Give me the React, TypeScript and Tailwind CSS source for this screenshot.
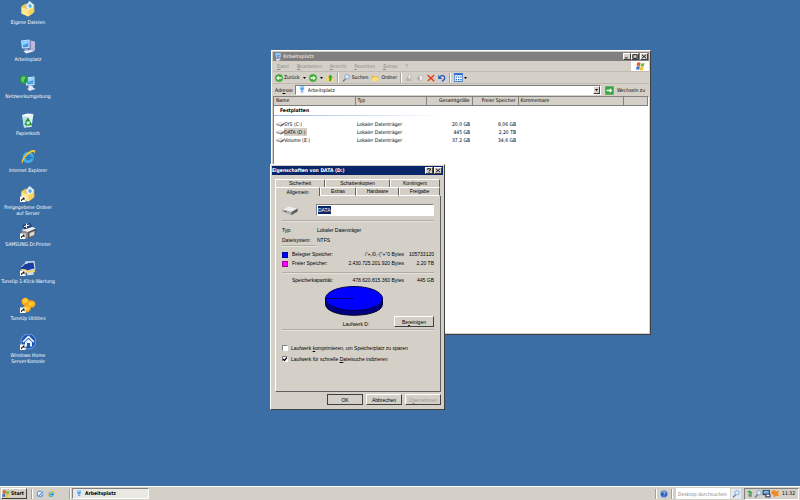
import { useState } from "react";
import type { ReactNode } from "react";

const raised =
  "border border-t-white border-l-white border-r-[#404040] border-b-[#404040] bg-[#d4d0c8]";
const sunken = "border border-t-[#808080] border-l-[#808080] border-r-white border-b-white";
const dialogFont = "font-['Liberation_Sans',Arial,sans-serif]";
const captionFont = "font-['DejaVu_Sans_Condensed','Noto_Sans',sans-serif] font-bold";

function Svg({ className, children }: { className?: string; children: ReactNode }) {
  return (
    <svg viewBox="0 0 32 32" className={`shrink-0 ${className ?? "size-4"}`} aria-hidden="true">
      {children}
    </svg>
  );
}

function Shortcut() {
  return (
    <g>
      <rect x="0" y="21" width="11" height="11" fill="#fff" />
      <path d="M2 30c0-4 2-5 4-5v-2h3v6l-2-2c-2 0-3 1-3 3z" fill="#111" />
    </g>
  );
}

function FolderArt() {
  return (
    <g>
      <path d="M3 10l9-5 4 3 12-2 1 16-12 9L3 25z" fill="#f1c64f" />
      <path d="M12 9L19 0l9 8-4 14-9-2z" fill="#e6f3fb" stroke="#9cc4dc" />
      <path d="M16 10l4-5 4 5-3 5z" fill="#5fa9de" />
      <path d="M3 12l10 4 14-3-2 12-9 6L3 25z" fill="#ffe793" />
      <path d="M17 18l9-3-1 9-8 5z" fill="#f7d25d" />
    </g>
  );
}

function ComputerArt() {
  return (
    <g>
      <path d="M21 5l9 2v18l-8 3z" fill="#b9b8dd" />
      <path d="M18 4l4 1v22l-4-2z" fill="#8582b8" />
      <path d="M2 5l17-2v17L4 21z" fill="#cfe2f7" />
      <path d="M4 7l13-2v13L6 19z" fill="#3e9ae8" />
      <path d="M4 7l13-2v5L5 15z" fill="#8fd0ff" />
      <path d="M9 21h7l1 4-8 1z" fill="#9aa4c4" />
      <path d="M7 26l14-2 6 3-15 4z" fill="#ececf8" />
    </g>
  );
}

// The small version used in title bars and the address box
function SmallComputerArt() {
  return (
    <g>
      <path d="M6 1l20-1v17l-18 2z" fill="#d9ecff" />
      <path d="M9 3l14-1v12l-13 2z" fill="#3e96ea" />
      <path d="M9 3l14-1v5L9 11z" fill="#8ccdff" />
      <path d="M13 18h8v6h-8z" fill="#4f7fc4" />
      <path d="M8 24l15-2 4 4-12 6-7-3z" fill="#dfe6f6" />
    </g>
  );
}

function NetworkArt() {
  return (
    <g>
      <path d="M10 5l19-2v17l-17 1z" fill="#cfe2f7" />
      <path d="M13 7l14-2v13l-13 1z" fill="#4aa5ec" />
      <path d="M13 7l14-2v5l-13 4z" fill="#98d8ff" />
      <path d="M17 21h8l1 4-9 2zM14 27l12-2 5 3-12 4z" fill="#e4e4f2" />
      <circle cx="8" cy="9" r="8" fill="#239b42" />
      <path d="M2 6l6-4 3 4-4 5 2 5-6-3z" fill="#67d05b" />
    </g>
  );
}

function BinArt() {
  return (
    <g>
      <path d="M4 6l23-2-4 26-15 1z" fill="#dff2f5" />
      <path d="M4 6l11-3 12 1-11 4z" fill="#fff" />
      <path d="M5 9l11 1-1 20-7 1z" fill="#b9dfe8" />
      <path d="M12 20l4-6 3 5M20 20l2 5-6 1M15 27l-4-3 1-3" fill="none" stroke="#16952c" strokeWidth="3" />
    </g>
  );
}

function IeArt() {
  return (
    <g>
      <path d="M25 20c-5 9-18 6-17-4 1-10 17-10 17 1H10" fill="none" stroke="#3fb0ec" strokeWidth="5" />
      <path d="M9 17h16" stroke="#1672c0" strokeWidth="3" />
      <path d="M5 29C-2 27 12 4 26 2c6-1 5 4 3 8 0-5-3-5-8-2C12 13 5 24 5 29z" fill="#f4c430" />
    </g>
  );
}

function PrinterArt() {
  return (
    <g>
      <path d="M3 14l19-7 10 4v14l-16 6L3 27z" fill="#898989" />
      <path d="M3 14l19-7 10 4-16 7z" fill="#f1f1f1" />
      <path d="M16 18l16-7v14l-16 6z" fill="#535353" />
      <path d="M19 20l10-4v8l-10 4z" fill="#d5d5d5" />
      <path d="M5 4l16-4 3 8-15 5z" fill="#173f7d" />
      <path d="M13 1v9M8 7l11-3" stroke="#fff" strokeWidth="2" />
    </g>
  );
}

function MaintenanceArt() {
  return (
    <g>
      <path d="M10 3l19-1 2 17-17 4z" fill="#dbe6f4" />
      <path d="M13 6l14-1 2 12-13 3z" fill="#1a3fa0" />
      <path d="M1 18c4-9 11-12 16-12l2 13-7 5z" fill="#193c9a" />
      <path d="M3 14c4-6 9-8 13-8" fill="none" stroke="#dbe6f4" strokeWidth="2" />
      <path d="M1 19c6-2 11 0 17 3l10-3 3 4-12 6z" fill="#f2d269" />
      <path d="M14 26l12-2 2 5-13 2z" fill="#ddd" />
    </g>
  );
}

function TuneUpArt() {
  return (
    <g>
      <path d="M3 9c0-9 13-10 15-2 7-2 14 2 13 8-1 5-5 7-9 6 0 9-11 13-15 7-3-5 0-9 2-11-4-1-6-4-6-8z" fill="#f5a515" />
      <path d="M5 7c2-6 9-6 11-1l-3 6-6 1zM18 11c4-3 10-1 11 3l-6 4-6-2zM10 20l6-2 4 3-3 6-6-1z" fill="#ffca3a" />
    </g>
  );
}

function HomeServerArt() {
  return (
    <g>
      <circle cx="17" cy="15" r="15" fill="#1d58b4" stroke="#88b8ec" strokeWidth="1.5" />
      <path d="M6 16L17 5l11 11" fill="none" stroke="#fff" strokeWidth="3" />
      <path d="M10 16l7-6 7 6v9h-4v-7h-6v7h-4z" fill="#e4f1ff" />
    </g>
  );
}

function DriveArt() {
  return (
    <g>
      <path d="M1 15l13-7 17 5v6l-12 7L1 19z" fill="#8b8b8b" />
      <path d="M1 15l13-7 17 5-12 7z" fill="#eeeeee" />
      <path d="M1 15l18 5v6L1 19z" fill="#b5b5b5" />
      <path d="M19 20l12-7v6l-12 7z" fill="#606060" />
      <path d="M4 18l6 2" stroke="#4d4d4d" strokeWidth="1.5" />
    </g>
  );
}

function WindowsArt() {
  return (
    <g>
      <path d="M4 3c4-3 8-2 12 0l-2 12c-4-2-8-2-12 0z" fill="#ea5a2b" />
      <path d="M18 4c4 2 8 2 13-1l-3 12c-4 2-8 2-12 0z" fill="#7cba3c" />
      <path d="M2 17c3-2 7-2 12 0l-3 11c-4-2-7-2-11 0z" fill="#3a7ad9" />
      <path d="M15 18c5 2 9 2 13 0l-3 11c-4 2-8 2-13 0z" fill="#f7c32e" />
    </g>
  );
}

function SearchArt() {
  return (
    <g>
      <path d="M15 18L4 30" stroke="#6b7d94" strokeWidth="5" />
      <circle cx="20" cy="11" r="9" fill="#d6edff" stroke="#7798c0" strokeWidth="3" />
    </g>
  );
}

function ArrowArt({ flip = false }: { flip?: boolean }) {
  return (
    <g>
      <circle cx="16" cy="16" r="15" fill="#3fb035" stroke="#2f9328" />
      <path
        d={flip ? "M15 6L5 16l10 10v-7h11v-6H15z" : "M17 6l10 10-10 10v-7H6v-6h11z"}
        fill="#fff"
      />
    </g>
  );
}

const shortcuts = [
  { lines: ["Eigene Dateien"], art: <FolderArt />, link: false },
  { lines: ["Arbeitsplatz"], art: <ComputerArt />, link: false },
  { lines: ["Netzwerkumgebung"], art: <NetworkArt />, link: false },
  { lines: ["Papierkorb"], art: <BinArt />, link: false },
  { lines: ["Internet Explorer"], art: <IeArt />, link: false },
  { lines: ["Freigegebene Ordner", "auf Server"], art: <FolderArt />, link: true },
  { lines: ["SAMSUNG Dr.Printer"], art: <PrinterArt />, link: true },
  { lines: ["TuneUp 1-Klick-Wartung"], art: <MaintenanceArt />, link: true },
  { lines: ["TuneUp Utilities"], art: <TuneUpArt />, link: true },
  { lines: ["Windows Home", "Server-Konsole"], art: <HomeServerArt />, link: true },
];

const drives = [
  { name: "SYS (C:)", total: "20,0 GB", free: "8,06 GB" },
  { name: "DATA (D:)", total: "445 GB", free: "2,20 TB" },
  { name: "Volume (E:)", total: "37,2 GB", free: "34,6 GB" },
];

function DesktopIcons() {
  return (
    <nav className="flex w-14 flex-col text-white" aria-label="Desktop">
      {shortcuts.map(s => (
        <button key={s.lines[0]} type="button" className="flex h-[37px] flex-col items-center gap-0.5 pt-px">
          <Svg>
            {s.art}
            {s.link && <Shortcut />}
          </Svg>
          <span className="flex flex-col items-center leading-[6px] whitespace-nowrap">
            {s.lines.map(line => (
              <span key={line}>{line}</span>
            ))}
          </span>
        </button>
      ))}
    </nav>
  );
}

function CaptionButton({ label, children }: { label: string; children: ReactNode }) {
  return (
    <button type="button" aria-label={label} className={`flex h-[7px] w-2 items-center justify-center ${raised}`}>
      <svg viewBox="0 0 8 7" className="h-[5px] w-1.5" fill="none" stroke="#000" strokeWidth="1.2">
        {children}
      </svg>
    </button>
  );
}

function Separator() {
  return <span className="h-2.5 w-0.5 shrink-0 border-l border-[#a5a29b] bg-white" />;
}

function Caret() {
  return (
    <svg viewBox="0 0 6 4" className="h-0.5 w-[3px] shrink-0" aria-hidden="true">
      <path d="M0 0h6L3 4z" fill="#000" />
    </svg>
  );
}

function Explorer() {
  const [selected, setSelected] = useState("DATA (D:)");

  return (
    <section className={`absolute top-[50px] left-[271px] flex h-[285px] w-[380px] flex-col p-px ${raised}`}>
      <header className="flex h-[9px] shrink-0 items-center gap-px bg-[#808080] px-px text-[#d4d0c8]">
        <Svg className="size-2"><SmallComputerArt /></Svg>
        <h1 className={`flex-1 ${captionFont}`}>Arbeitsplatz</h1>
        <div className="flex">
          <CaptionButton label="Minimieren"><path d="M1 5.5h4" /></CaptionButton>
          <CaptionButton label="Maximieren"><path d="M1 1h6v5H1z" /></CaptionButton>
        </div>
        <CaptionButton label="Schließen"><path d="M1 1l6 5M7 1L1 6" /></CaptionButton>
      </header>

      <div className="flex h-[11px] shrink-0 items-stretch border-b border-[#bfbbb3]">
        <div className="flex flex-1 items-center gap-2 pl-1 text-[#8b8984]">
          {["Datei", "Bearbeiten", "Ansicht", "Favoriten", "Extras", "?"].map(m => (
            <button key={m} type="button" className="first-letter:underline">{m}</button>
          ))}
        </div>
        <div className="flex w-[18px] items-center justify-center bg-white">
          <Svg className="size-[9px]"><WindowsArt /></Svg>
        </div>
      </div>

      <div className="flex h-3 shrink-0 items-center gap-[3px] border-b border-[#bfbbb3] pl-0.5">
        <button type="button" className="flex items-center gap-px">
          <Svg className="size-2"><ArrowArt flip /></Svg>Zurück
        </button>
        <Caret />
        <button type="button" aria-label="Vorwärts"><Svg className="size-2"><ArrowArt /></Svg></button>
        <Caret />
        <button type="button" aria-label="Aufwärts">
          <Svg className="size-2">
            <path d="M1 8h10l3 4h16v18H1z" fill="#f5d873" />
            <path d="M13 29V14H8L18 2l9 12h-5v10l-5 5z" fill="#36a32c" />
          </Svg>
        </button>
        <Separator />
        <button type="button" className="flex items-center gap-0.5">
          <Svg className="size-2"><SearchArt /></Svg>Suchen
        </button>
        <button type="button" className="flex items-center gap-0.5">
          <Svg className="size-2"><path d="M1 6h11l3 4h14v18H3z" fill="#e8b941" /><path d="M6 14h25l-5 14H3z" fill="#ffe07a" /></Svg>
          Ordner
        </button>
        <Separator />
        <button type="button" aria-label="Verschieben" disabled>
          <Svg className="size-2"><path d="M5 12h20v16H5z" fill="#bab7b0" /><path d="M13 2h10v18H13z" fill="#eee" stroke="#aaa" strokeWidth="2" /></Svg>
        </button>
        <button type="button" aria-label="Kopieren" disabled>
          <Svg className="size-2"><path d="M3 18l10-10v20z" fill="#aaa" /><path d="M14 6h12v19H14z" fill="#eee" stroke="#aaa" strokeWidth="2" /></Svg>
        </button>
        <button type="button" aria-label="Löschen">
          <Svg className="size-2"><path d="M2 4l27 25M29 4L3 28" stroke="#e63c19" strokeWidth="6" /></Svg>
        </button>
        <button type="button" aria-label="Rückgängig">
          <Svg className="size-2"><path d="M8 11c8-9 19-5 19 5 0 6-5 10-11 13" fill="none" stroke="#2b5fc0" strokeWidth="6" /><path d="M1 3v17h16z" fill="#2b5fc0" /></Svg>
        </button>
        <Separator />
        <button type="button" aria-label="Ansichten" className="flex items-center gap-px">
          <Svg className="size-[9px]"><path d="M1 2h30v28H1z" fill="#fff" stroke="#2a69c7" strokeWidth="3" /><path d="M1 2h30v6H1z" fill="#2a69c7" /><path d="M6 12h5v5H6zM14 12h5v5h-5zM22 12h5v5h-5zM6 21h5v5H6zM14 21h5v5h-5zM22 21h5v5h-5z" fill="#2a69c7" /></Svg>
          <Caret />
        </button>
      </div>

      <div className="flex h-3 shrink-0 items-center gap-0.5 pl-0.5">
        <label htmlFor="address">Adr<u>e</u>sse</label>
        <div className={`flex h-2.5 flex-1 items-center gap-0.5 bg-white pl-0.5 ${sunken}`}>
          <Svg className="size-2"><SmallComputerArt /></Svg>
          <div className="relative flex flex-1">
            <select id="address" className="h-2 flex-1 appearance-none bg-white leading-[8px]">
              <option>Arbeitsplatz</option>
            </select>
            <span className={`pointer-events-none absolute top-0 right-0 flex h-2 w-[7px] items-center justify-center ${raised}`}>
              <Caret />
            </span>
          </div>
        </div>
        <button type="button" className="flex items-center gap-0.5 pr-1 pl-0.5">
          <Svg className="mr-px size-[9px]"><path d="M1 1h30v30H1z" fill="#36a344" /><path d="M17 7l9 9-9 9v-6H6v-6h11z" fill="#fff" /></Svg>
          Wechseln zu
        </button>
      </div>

      <div className={`flex-1 overflow-hidden bg-white ${sunken}`}>
        <table className="w-full table-fixed border-collapse text-left">
          <colgroup>
            <col className="w-[81px]" />
            <col className="w-[71px]" />
            <col className="w-[46px]" />
            <col className="w-[46px]" />
            <col className="w-[105px]" />
            <col />
          </colgroup>
          <thead>
            <tr className="h-2 border-b border-[#808080] bg-[#d4d0c8] *:border-r *:border-[#808080] *:px-0.5 *:font-normal *:leading-[7px]">
              <th>Name</th>
              <th>Typ</th>
              <th className="text-right">Gesamtgröße</th>
              <th className="text-right whitespace-nowrap">Freier Speicher</th>
              <th>Kommentare</th>
              <th aria-label="Leer" />
            </tr>
          </thead>
          <tbody>
            <tr>
              <th colSpan={6} className="pb-1">
                <div className="w-[170px] bg-linear-to-r from-[#9db9e4] to-white pb-px">
                  <div className={`bg-white pl-1.5 leading-[9px] ${captionFont}`}>Festplatten</div>
                </div>
              </th>
            </tr>
            {drives.map(d => (
              <tr key={d.name} onClick={() => setSelected(d.name)} className="*:px-0.5 *:leading-[8px]">
                <td>
                  <span className="flex items-center">
                    <Svg className="size-2"><DriveArt /></Svg>
                    <span className={selected === d.name ? "bg-[#d4d0c8] pr-0.5" : ""}>{d.name}</span>
                  </span>
                </td>
                <td>Lokaler Datenträger</td>
                <td className="text-right">{d.total}</td>
                <td className="text-right">{d.free}</td>
                <td />
                <td />
              </tr>
            ))}
          </tbody>
        </table>
      </div>
    </section>
  );
}

function Rule({ className = "" }: { className?: string }) {
  return <div className={`h-0.5 shrink-0 border-t border-[#b0ada5] bg-[#e6e3dd] ${className}`} />;
}

function Pie() {
  return (
    <svg viewBox="0 0 58 30" className="h-[30px] w-[58px]" role="img" aria-label="Laufwerk D:">
      <path d="M0.5 12v6c0 15 57 15 57 0v-6z" fill="#000080" stroke="#000030" />
      <ellipse cx="29" cy="12.500" rx="28.500" ry="12" fill="#0000ff" stroke="#000050" />
      <path d="M1 12.500h28" stroke="#000070" />
    </svg>
  );
}

const tab =
  "border-t border-l border-r border-t-white border-l-white border-r-[#606060] rounded-t-[1px] leading-[7px]";

function Properties() {
  const [name, setName] = useState("DATA");

  return (
    <section
      role="dialog"
      aria-label="Eigenschaften von DATA (D:)"
      className={`absolute top-[164px] left-[270px] flex w-[175px] flex-col p-px ${raised} ${dialogFont}`}
    >
      <header className="flex h-[9px] items-center bg-[#0a246a] pr-px text-white">
        <h2 className={`flex-1 whitespace-nowrap ${captionFont}`}>Eigenschaften von DATA (D:)</h2>
        <div className="flex gap-px">
          <CaptionButton label="Hilfe"><path d="M2 2.500V1h4v2L4 4M4 5v2" /></CaptionButton>
          <CaptionButton label="Schließen"><path d="M1 1l6 5M7 1L1 6" /></CaptionButton>
        </div>
      </header>

      <div className="flex flex-col pt-1 pr-0.5 pl-[3px]">
        <div role="tablist" className="flex flex-col">
          <div className="flex h-2 pr-px">
            <button type="button" role="tab" className={`w-[50px] ${tab}`}>Sicherheit</button>
            <button type="button" role="tab" className={`w-[65px] ${tab}`}>Schattenkopien</button>
            <button type="button" role="tab" className={`flex-1 ${tab}`}>Kontingent</button>
          </div>
          <div className="flex h-[9px] pr-px">
            <button type="button" role="tab" aria-selected="true" className={`w-[45px] ${tab}`}>Allgemein</button>
            <button type="button" role="tab" className={`w-9 border-b border-b-white ${tab}`}>Extras</button>
            <button type="button" role="tab" className={`w-[43px] border-b border-b-white ${tab}`}>Hardware</button>
            <button type="button" role="tab" className={`flex-1 border-b border-b-white ${tab}`}>Freigabe</button>
          </div>
        </div>

        <div className="flex h-[196px] flex-col border-r border-b border-l border-r-[#606060] border-b-[#606060] border-l-white px-1.5 pt-1.5">
          <div className="flex items-center">
            <Svg className="mr-[18px] size-4"><DriveArt /></Svg>
            <div className={`flex h-3 flex-1 items-center bg-white pl-px ${sunken}`}>
              <input
                aria-label="Name"
                value={name}
                onChange={e => setName(e.target.value)}
                className="field-sizing-content h-2 bg-[#0a246a] leading-[8px] text-white"
              />
            </div>
          </div>
          <Rule className="mt-0.5" />

          <dl className="mt-[3px] grid grid-cols-[35px_1fr] leading-[10px]">
            <dt>Typ:</dt>
            <dd>Lokaler Datenträger</dd>
            <dt>Dateisystem:</dt>
            <dd>NTFS</dd>
          </dl>
          <Rule className="w-[34px]" />

          <table className="mt-[3px] w-full leading-[9px]">
            <tbody>
              <tr>
                <td className="w-2.5"><div className="size-1.5 border border-[#0000a0] bg-[#0000ff]" /></td>
                <th className="text-left font-normal">Belegter Speicher:</th>
                <td className="text-right">/'+,/0,-(''+''0 Bytes</td>
                <td className="w-[30px] text-right">105733120</td>
              </tr>
              <tr>
                <td><div className="size-1.5 border border-[#a000a0] bg-[#ff00ff]" /></td>
                <th className="text-left font-normal">Freier Speicher:</th>
                <td className="text-right">2.430.725.201.920 Bytes</td>
                <td className="text-right">2,20 TB</td>
              </tr>
            </tbody>
          </table>
          <Rule className="mt-1" />
          <div className="mt-0.5 flex pl-2.5 leading-[9px]">
            <span>Speicherkapazität:</span>
            <span className="flex-1 text-right">478.620.815.360 Bytes</span>
            <span className="w-[30px] text-right">445 GB</span>
          </div>

          <div className="mt-px flex items-end pl-[43px]">
            <div className="flex flex-col items-center gap-1">
              <Pie />
              <span className="pl-1 leading-[8px]">Laufwerk D:</span>
            </div>
            <button type="button" className={`mb-px ml-auto h-[11px] w-10 leading-[8px] ${raised}`}>Be<u>r</u>einigen</button>
          </div>
          <Rule className="mt-px" />

          <div className="mt-[13px] flex flex-col gap-[3px] leading-[8px]">
            <label className="flex items-center gap-[3px]">
              <input type="checkbox" className={`size-1.5 appearance-none bg-white ${sunken}`} />
              <span>Laufwerk <u>k</u>omprimieren, um Speicherplatz zu sparen</span>
            </label>
            <label className="flex items-center gap-[3px]">
              <span className="relative flex">
                <input type="checkbox" defaultChecked className={`peer size-1.5 appearance-none bg-white ${sunken}`} />
                <svg viewBox="0 0 6 6" className="pointer-events-none absolute inset-0 hidden size-1.5 peer-checked:block">
                  <path d="M1 3l1.500 1.500L5 1.500" fill="none" stroke="#000" strokeWidth="1.200" />
                </svg>
              </span>
              <span>Laufwerk für schnelle <u>D</u>ateisuche indizieren</span>
            </label>
          </div>
        </div>

        <footer className="flex justify-end gap-[3px] pt-0.5 pb-[3px]">
          <button type="button" className={`h-[11px] w-9 leading-[8px] outline -outline-offset-1 outline-[#404040] ${raised}`}>OK</button>
          <button type="button" className={`h-[11px] w-9 leading-[8px] ${raised}`}>Abbrechen</button>
          <button type="button" disabled className={`h-[11px] w-9 leading-[8px] text-[#9a9790] ${raised}`}>Ü<u>b</u>ernehmen</button>
        </footer>
      </div>
    </section>
  );
}

function Taskbar() {
  return (
    <footer className="flex h-3.5 items-center border-t border-white bg-[#d4d0c8] px-px">
      <button type="button" className={`flex h-[11px] w-[26px] items-center gap-px ${captionFont} ${raised}`}>
        <Svg className="size-2"><WindowsArt /></Svg>Start
      </button>
      <div className="ml-1 flex items-center gap-[3px]">
        <Separator />
        <button type="button" aria-label="Desktop anzeigen">
          <Svg className="size-2"><path d="M3 9l9-7 17 4v18l-11 6L3 25z" fill="#6ba3d7" /><path d="M8 9l14-2 5 8-10 9-9-4z" fill="#fff" /><path d="M11 21l12-13 3 3-12 12z" fill="#3577bd" /></Svg>
        </button>
        <button type="button" aria-label="Internet Explorer"><Svg className="size-2"><IeArt /></Svg></button>
      </div>
      <div className="ml-3.5 flex items-center gap-px">
        <Separator />
        <button type="button" className={`flex h-[11px] w-[77px] items-center gap-0.5 bg-[#eae8e3] pl-0.5 ${captionFont} ${sunken}`}>
          <Svg className="size-2"><SmallComputerArt /></Svg>Arbeitsplatz
        </button>
      </div>
      <div className="ml-auto flex items-center gap-[3px]">
        <Separator />
        <button type="button" aria-label="Hilfe">
          <Svg className="size-2"><circle cx="16" cy="16" r="14" fill="#2459bd" stroke="#a9c3ec" strokeWidth="2" /><path d="M11 12c0-7 11-6 10 0-1 3-5 3-5 7M16 22v4" fill="none" stroke="#fff" strokeWidth="3" /></Svg>
        </button>
        <Separator />
        <div className="flex items-center gap-px">
          <input
            aria-label="Desktop durchsuchen"
            placeholder="Desktop durchsuchen"
            className="h-[11px] w-[54px] bg-white px-0.5 leading-[9px] placeholder:text-[#808080]"
          />
          <button type="button" aria-label="Suchen" className="bg-[#e2ebf5] p-px"><Svg className="size-2"><SearchArt /></Svg></button>
        </div>
        <div className={`flex h-3 items-center px-px ${sunken}`}>
          <Svg className="size-2"><path d="M4 6l12-4 10 10-6 5z" fill="#3ba845" /><path d="M10 14l14 4-3 11-10-3z" fill="#6f8f72" /></Svg>
          <Svg className="size-2"><SearchArt /></Svg>
          <Svg className="size-[9px]"><path d="M2 3h26v19H2z" fill="#2b4358" /><path d="M6 6h18v11H6z" fill="#7fb4df" /><path d="M12 17h18v13H12z" fill="#1d3a67" /><path d="M16 20h10v6H16z" fill="#fff" /></Svg>
          <Svg className="size-[9px]"><path d="M2 8l10-5 5 6 12-3-4 10 4 8-11 1-7 5-2-9-8-4z" fill="#f08a24" /></Svg>
          <time className="px-0.5">11:32</time>
        </div>
      </div>
    </footer>
  );
}

export default function App() {
  return (
    <div className="relative flex min-h-screen flex-col bg-[#3a6ea5] font-['DejaVu_Sans_Condensed','Noto_Sans',sans-serif] text-[5px] leading-[7px] text-black">
      <main className="flex-1">
        <DesktopIcons />
        <Explorer />
        <Properties />
      </main>
      <Taskbar />
    </div>
  );
}
